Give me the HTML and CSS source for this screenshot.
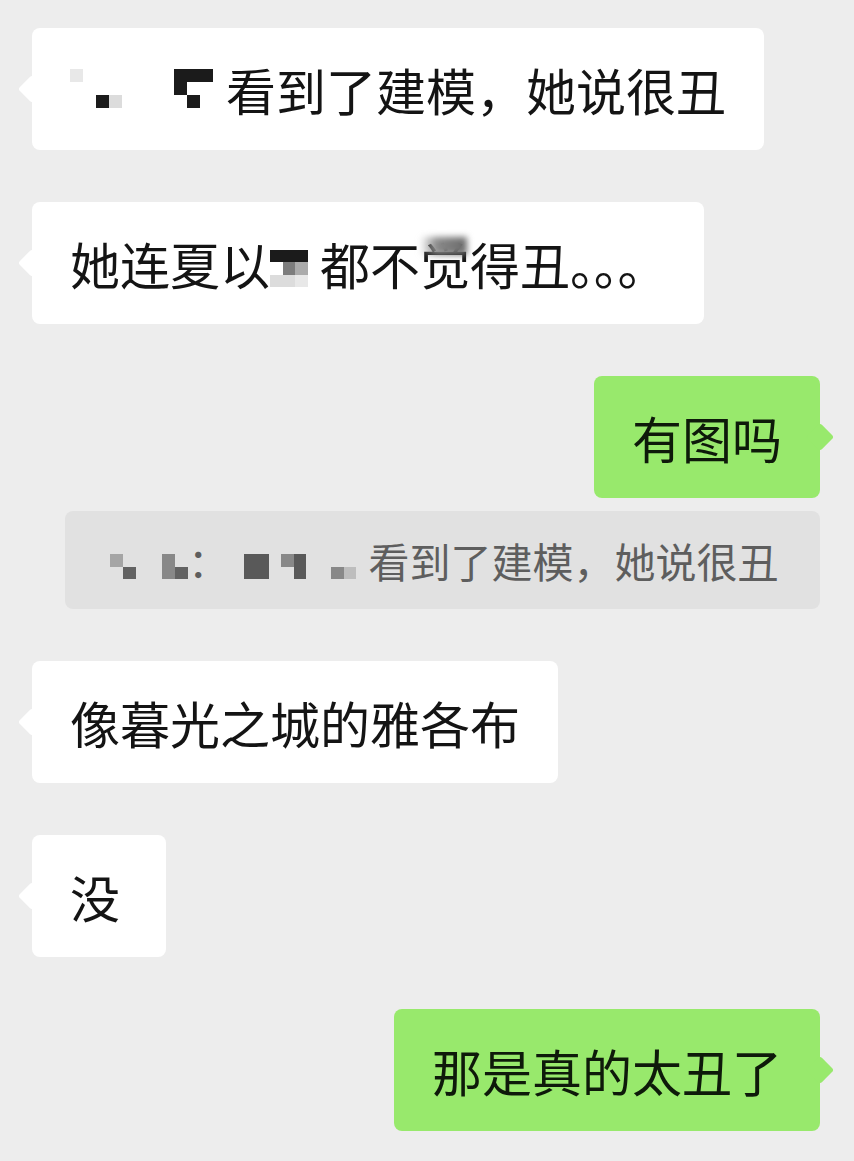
FILE: index.html
```html
<!DOCTYPE html>
<html lang="zh">
<head>
<meta charset="utf-8">
<link rel="stylesheet" href="styles.css">
</head>
<body>
<div class="chat">
  <div class="row">
    <div class="bubble"><span class="mosaic m1"><i class="l1"></i><i></i><i></i><i></i><i></i><i></i><i></i><i></i><i class="d"></i><i class="d"></i><i class="d"></i><i></i><i></i><i></i><i></i><i></i><i></i><i></i><i></i><i></i><i class="d"></i><i></i><i></i><i></i><i></i><i></i><i class="d"></i><i class="l2"></i><i></i><i></i><i></i><i></i><i></i><i class="d"></i><i></i><i></i></span>看到了建模，她说很丑</div>
  </div>
  <div class="row">
    <div class="bubble">她连夏以<span class="mosaic m2"><i class="d"></i><i class="d"></i><i class="d"></i><i></i><i class="w"></i><i class="g5"></i><i class="g7"></i><i></i><i class="l2"></i><i class="l2"></i><i class="l1"></i><i></i></span>都不<span class="blurred">觉</span>得丑<span class="dots">。。。</span></div>
  </div>
  <div class="row me">
    <div class="bubble green">有图吗</div>
  </div>
  <div class="quote-row">
    <div class="quote"><span class="mosaic m3"><i class="q1"></i><i></i><i></i><i></i><i class="q2"></i><i></i><i></i><i class="q3"></i><i></i><i></i><i class="q2"></i><i class="q3"></i></span>：<span class="mosaic m4"><i></i><i class="q4"></i><i class="q4"></i><i></i><i class="q2"></i><i class="q4"></i><i></i><i></i><i></i><i></i><i></i><i></i><i class="q4"></i><i class="q4"></i><i></i><i></i><i class="q4"></i><i></i><i></i><i class="q2"></i><i class="q5"></i><i></i></span>看到了建模，她说很丑</div>
  </div>
  <div class="row">
    <div class="bubble">像暮光之城的雅各布</div>
  </div>
  <div class="row">
    <div class="bubble single">没</div>
  </div>
  <div class="row me">
    <div class="bubble green">那是真的太丑了</div>
  </div>
</div>
</body>
</html>
```

FILE: styles.css
```css
html, body {
  margin: 0;
  padding: 0;
}
body {
  background: #ededed;
  font-family: "Noto Sans CJK SC", "Noto Sans", sans-serif;
  width: 854px;
  height: 1161px;
  overflow: hidden;
}
.chat {
  display: flex;
  flex-direction: column;
  padding: 28px 34px 0 32px;
}
.row {
  display: flex;
  margin-top: 52px;
}
.row:first-child {
  margin-top: 0;
}
.row.me {
  justify-content: flex-end;
}
.bubble {
  position: relative;
  background: #ffffff;
  border-radius: 8px;
  padding: 26px 38px;
  font-size: 50px;
  line-height: 70px;
  color: #141414;
  white-space: nowrap;
}
.bubble::before {
  content: "";
  position: absolute;
  top: 50%;
  left: 0;
  width: 20px;
  height: 20px;
  background: inherit;
  border-radius: 3px;
  transform: translate(-50%, -50%) rotate(45deg);
}
.bubble.green {
  background: #98e96c;
  color: #0e1a0a;
}
.bubble.green::before {
  left: 100%;
}
.bubble.single {
  min-width: 134px;
  box-sizing: border-box;
}
.dots {
  letter-spacing: -1.3px;
}
.blurred {
  position: relative;
}
.blurred::after {
  content: "";
  position: absolute;
  left: 0;
  top: 10px;
  width: 47px;
  height: 18px;
  background: linear-gradient(90deg, rgba(255,255,255,0) 0%, #8a8a8a 35%, #6a6a6a 100%);
  filter: blur(3px);
}
.quote-row {
  display: flex;
  margin-top: 13px;
  margin-left: 33px;
}
.quote {
  flex: 1;
  background: #e1e1e1;
  border-radius: 8px;
  padding: 20px 0 20px 45px;
  font-size: 41px;
  line-height: 58px;
  color: #5e5e5e;
  white-space: nowrap;
}
.mosaic {
  display: inline-grid;
  vertical-align: middle;
}
.mosaic i {
  display: block;
}
.m1 {
  grid-template-columns: repeat(12, 13px);
  grid-auto-rows: 13px;
  position: relative;
  top: -9px;
}
.m2 {
  grid-template-columns: repeat(4, 12.5px);
  grid-auto-rows: 12.5px;
  position: relative;
  top: -3px;
}
.m3 {
  grid-template-columns: repeat(6, 13px);
  grid-auto-rows: 12.5px;
}
.m4 {
  grid-template-columns: repeat(11, 12.5px);
  grid-auto-rows: 12.5px;
  margin-left: 2px;
}
.d { background: #1b1b1b; }
.l1 { background: #e8e8e8; }
.l2 { background: #dcdcdc; }
.w { background: #ffffff; }
.g5 { background: #7d7d7d; }
.g7 { background: #ababab; }
.q1 { background: #a5a5a5; }
.q2 { background: #888888; }
.q3 { background: #626262; }
.q4 { background: #595959; }
.q5 { background: #bdbdbd; }
```
